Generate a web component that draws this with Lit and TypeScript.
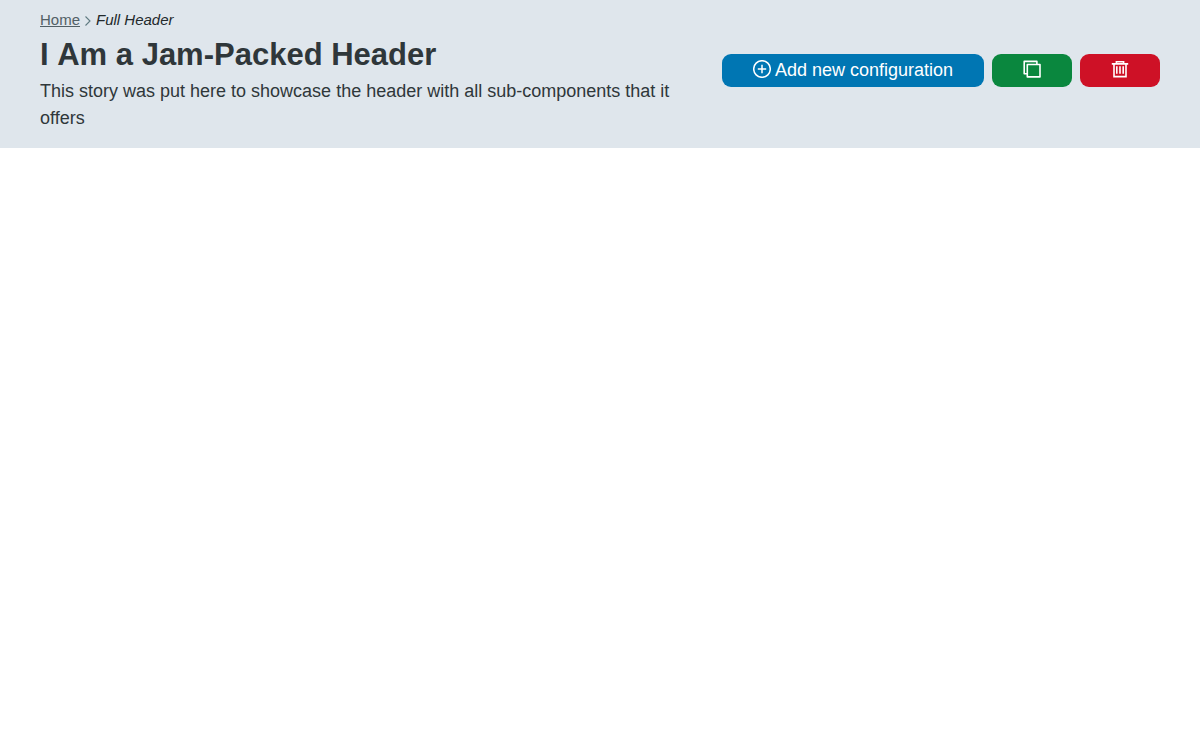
import { LitElement, html, css } from "lit";
import { customElement } from "lit/decorators.js";

@customElement("app-root")
export class AppRoot extends LitElement {
  static styles = css`
    :host { display: block; font-family: "Liberation Sans", Arial, sans-serif; font-size: 18px; line-height: 27px; color: #2f373a; }
    * { box-sizing: border-box; }
    .header { display: flex; align-items: center; justify-content: space-between; gap: 32px; padding: 8px 40px 16px; background: #dfe6ec; }
    .crumbs { display: flex; align-items: center; gap: 4px; margin: 0; padding: 0; list-style: none; font-size: 15px; line-height: 24px; }
    .crumbs li { display: flex; align-items: center; gap: 4px; }
    .crumbs a { color: #526066; }
    .crumbs svg { width: 8px; height: 12px; }
    .current { font-style: italic; color: #22292b; }
    .title { margin: 4px 0; font-size: 31px; line-height: 38px; font-weight: 700; font-kerning: none; }
    .subtitle { margin: 0; }
    .actions { display: flex; flex: none; gap: 8px; }
    .btn { display: flex; align-items: center; justify-content: center; gap: 4px; height: 33px; min-width: 80px; padding: 0 31px; border: 0; border-radius: 9px; color: #fff; font: inherit; cursor: pointer; }
    .btn svg { width: 18px; height: 18px; margin-bottom: 3px; }
    .primary { background: #0076b3; }
    .success { background: #0a873e; }
    .danger { background: #ce1126; }
  `;

  render() {
    return html`
      <header class="header">
        <div>
          <nav aria-label="Breadcrumb">
            <ol class="crumbs">
              <li><a href="#">Home</a><svg viewBox="0 0 8 12" fill="none" stroke="#5f7a80" stroke-width="1.1" aria-hidden="true"><path d="M1.5 2.5L6 7l-4.5 4.5" /></svg></li>
              <li class="current" aria-current="page">Full Header</li>
            </ol>
          </nav>
          <h1 class="title">I Am a Jam-Packed Header</h1>
          <p class="subtitle">This story was put here to showcase the header with all sub-components that it offers</p>
        </div>
        <div class="actions">
          <button class="btn primary"><svg viewBox="0 0 18 18" fill="none" stroke="#fff" stroke-width="1.5" aria-hidden="true"><circle cx="9" cy="9" r="8.3" /><path d="M9 4.8v8.4M4.8 9h8.4" /></svg>Add new configuration</button>
          <button class="btn success" aria-label="Copy"><svg viewBox="0 0 18 18" fill="none" stroke="#fff" stroke-width="1.6" stroke-linejoin="round" aria-hidden="true"><path d="M4.3 4.5h12.7v12.4H4.3z" /><path d="M4.3 13.7H1.2V1.4h12.7v3.1" /></svg></button>
          <button class="btn danger" aria-label="Delete"><svg viewBox="0 0 18 18" fill="none" stroke="#fff" stroke-width="1.6" aria-hidden="true"><path d="M.8 3.9h16.4M3 4v12.6h12V4M5.4 3.9V1.8h7.2v2.1M5.8 6.2v7.6M9 6.2v7.6M12.2 6.2v7.6" /></svg></button>
        </div>
      </header>
    `;
  }
}
